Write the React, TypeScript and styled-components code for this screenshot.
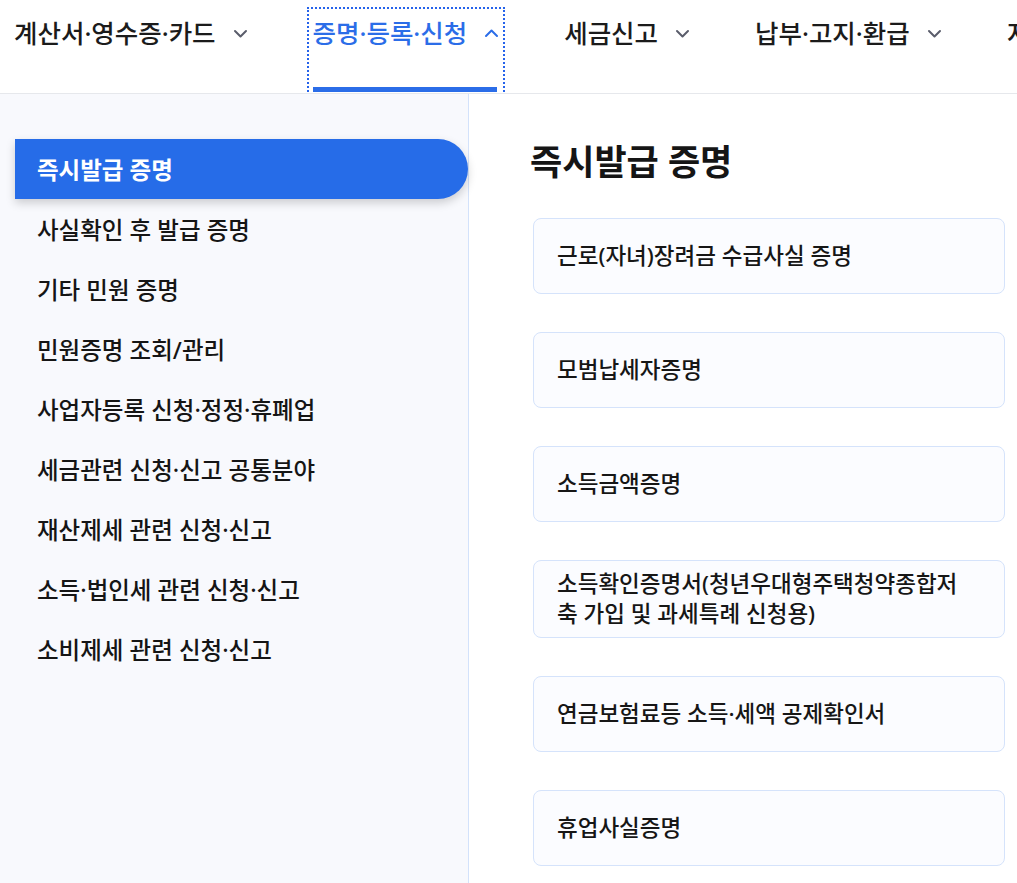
import React from 'react';
import styled, { createGlobalStyle } from 'styled-components';

const GlobalStyle = createGlobalStyle`
  html, body {
    margin: 0;
    padding: 0;
    background: #ffffff;
    font-family: "Noto Sans", "Noto Sans CJK KR", sans-serif;
    color: #111111;
    overflow: hidden;
  }
  * { box-sizing: border-box; }
`;

const Page = styled.div`
  display: flex;
  flex-direction: column;
  height: 100vh;
`;

const TopNav = styled.nav`
  display: flex;
  align-items: flex-start;
  gap: 57px;
  height: 94px;
  padding: 9px 0 0 10px;
  border-bottom: 1px solid #e6e8ec;
  white-space: nowrap;
  overflow: hidden;
  flex-shrink: 0;
`;

const NavItem = styled.button<{ $active?: boolean }>`
  display: flex;
  flex-direction: column;
  height: 84px;
  padding: 0 4px;
  border: none;
  background: none;
  font: inherit;
  cursor: pointer;
  outline: ${(p) => (p.$active ? '2px dotted #2563eb' : 'none')};
  color: ${(p) => (p.$active ? '#2b6de8' : '#1b1b1b')};
  flex-shrink: 0;
`;

const NavLabel = styled.span`
  display: flex;
  align-items: flex-start;
  gap: 17px;
  flex: 1;
  padding-top: 9px;
  font-size: 25.5px;
  font-weight: 500;
  line-height: 30px;
`;

const Chevron = styled.svg<{ $active?: boolean }>`
  width: 15px;
  height: 30px;
  color: ${(p) => (p.$active ? '#2b6de8' : '#5a5d6b')};
`;

const Underline = styled.span<{ $active?: boolean }>`
  height: 5px;
  margin: 0 2px 1px 0;
  background: ${(p) => (p.$active ? '#2b6de8' : 'transparent')};
`;

const Body = styled.div`
  display: flex;
  flex: 1;
  min-height: 0;
`;

const Sidebar = styled.aside`
  width: 469px;
  flex-shrink: 0;
  background: #f8f9fd;
  border-right: 1px solid #d3e2fb;
  padding-top: 45px;
  display: flex;
  flex-direction: column;
`;

const SideItem = styled.div<{ $active?: boolean }>`
  display: flex;
  align-items: center;
  height: 60px;
  margin-left: 15px;
  padding-left: 22px;
  font-size: 23.5px;
  font-weight: ${(p) => (p.$active ? 700 : 500)};
  color: ${(p) => (p.$active ? '#ffffff' : '#151515')};
  background: ${(p) => (p.$active ? '#266ce8' : 'transparent')};
  border-radius: 0 30px 30px 0;
  box-shadow: ${(p) => (p.$active ? '0 4px 10px rgba(0, 0, 0, 0.18)' : 'none')};
`;

const Main = styled.main`
  flex: 1;
  padding: 47px 12px 0 64px;
  display: flex;
  flex-direction: column;
`;

const Heading = styled.h2`
  margin: 0 0 35px -3px;
  font-size: 35px;
  font-weight: 700;
  line-height: 42px;
  color: #151515;
`;

const CardList = styled.div`
  display: flex;
  flex-direction: column;
  gap: 38px;
`;

const Card = styled.div`
  display: flex;
  align-items: center;
  min-height: 76px;
  padding: 8px 40px 8px 23px;
  border: 1px solid #d5e3fb;
  border-radius: 8px;
  background: #fbfcff;
  font-size: 22.5px;
  font-weight: 500;
  line-height: 30px;
  color: #161616;
`;

const navItems = [
  { label: '계산서·영수증·카드' },
  { label: '증명·등록·신청', active: true },
  { label: '세금신고' },
  { label: '납부·고지·환급' },
  { label: '지급명세서·자료제출·공익법인' },
];

const sideItems = [
  '즉시발급 증명',
  '사실확인 후 발급 증명',
  '기타 민원 증명',
  '민원증명 조회/관리',
  '사업자등록 신청·정정·휴폐업',
  '세금관련 신청·신고 공통분야',
  '재산제세 관련 신청·신고',
  '소득·법인세 관련 신청·신고',
  '소비제세 관련 신청·신고',
];

const cards = [
  '근로(자녀)장려금 수급사실 증명',
  '모범납세자증명',
  '소득금액증명',
  '소득확인증명서(청년우대형주택청약종합저축 가입 및 과세특례 신청용)',
  '연금보험료등 소득·세액 공제확인서',
  '휴업사실증명',
];

const ChevronIcon = ({ up, active }: { up?: boolean; active?: boolean }) => (
  <Chevron $active={active} viewBox="0 0 15 30" fill="none">
    <path
      d={up ? 'M2 18 L7.5 12.5 L13 18' : 'M2 13 L7.5 18.5 L13 13'}
      stroke="currentColor"
      strokeWidth="2"
      strokeLinecap="round"
      strokeLinejoin="round"
    />
  </Chevron>
);

export default function App() {
  return (
    <Page>
      <GlobalStyle />
      <TopNav>
        {navItems.map((item) => (
          <NavItem key={item.label} $active={item.active}>
            <NavLabel>
              {item.label}
              <ChevronIcon up={item.active} active={item.active} />
            </NavLabel>
            <Underline $active={item.active} />
          </NavItem>
        ))}
      </TopNav>
      <Body>
        <Sidebar>
          {sideItems.map((s, i) => (
            <SideItem key={s} $active={i === 0}>
              {s}
            </SideItem>
          ))}
        </Sidebar>
        <Main>
          <Heading>즉시발급 증명</Heading>
          <CardList>
            {cards.map((c) => (
              <Card key={c}>{c}</Card>
            ))}
          </CardList>
        </Main>
      </Body>
    </Page>
  );
}
